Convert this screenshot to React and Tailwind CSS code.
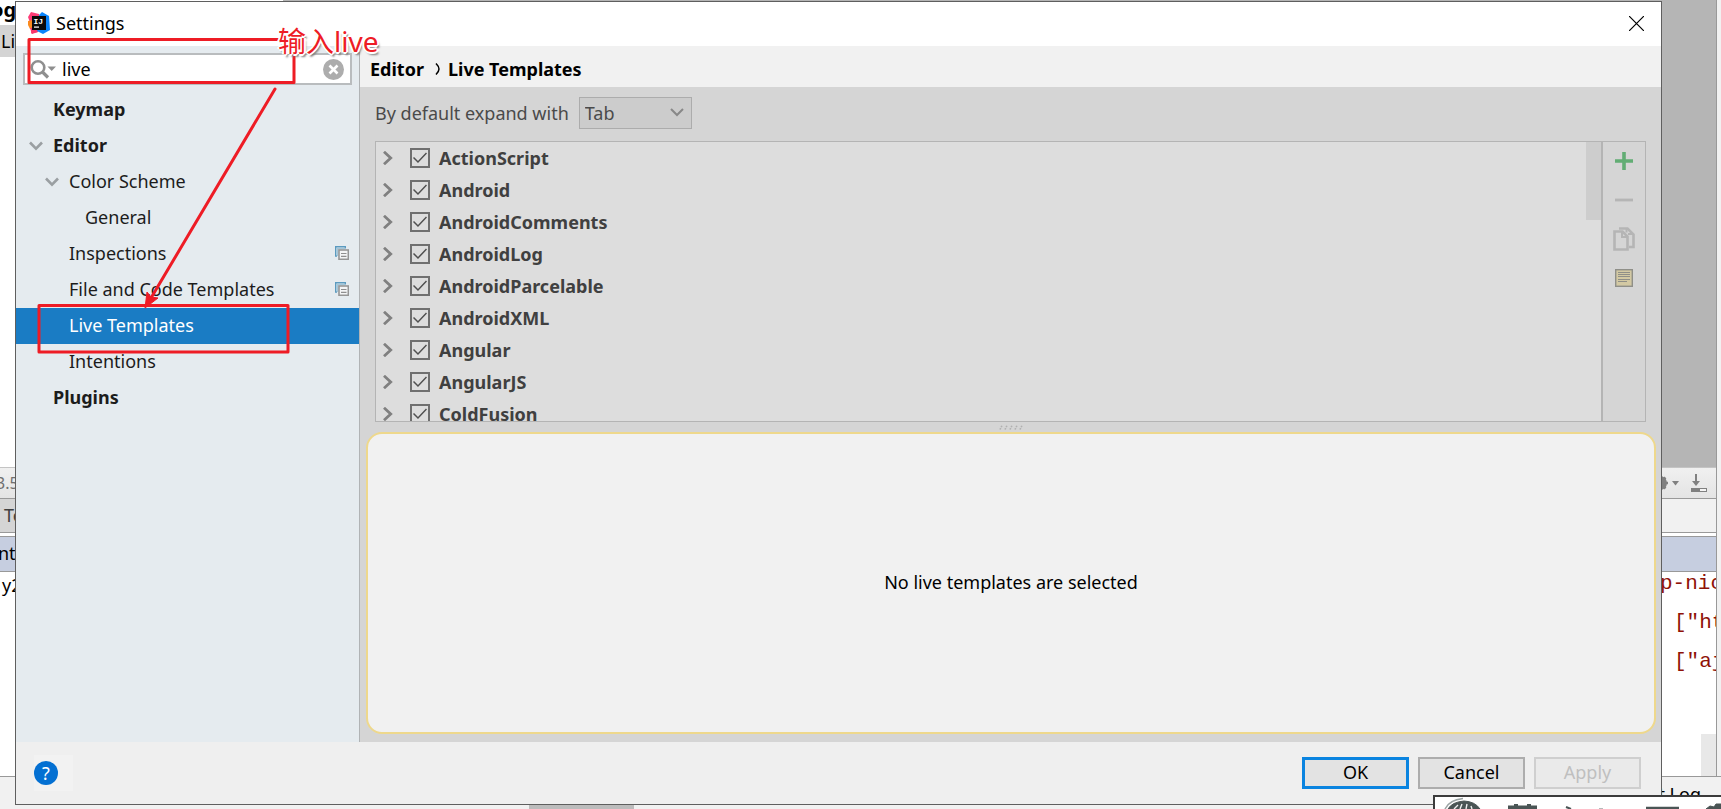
import React from "react";

const tree = [
  { label: "Keymap", pad: "pl-[13px]", bold: true },
  { label: "Editor", pad: "pl-[13px]", bold: true, open: true },
  { label: "Color Scheme", pad: "pl-[29px]", open: true },
  { label: "General", pad: "pl-[45px]" },
  { label: "Inspections", pad: "pl-[29px]", copy: true },
  { label: "File and Code Templates", pad: "pl-[29px]", copy: true },
  { label: "Live Templates", pad: "pl-[29px]", selected: true },
  { label: "Intentions", pad: "pl-[29px]" },
  { label: "Plugins", pad: "pl-[13px]", bold: true },
];

const groups = [
  "ActionScript",
  "Android",
  "AndroidComments",
  "AndroidLog",
  "AndroidParcelable",
  "AndroidXML",
  "Angular",
  "AngularJS",
  "ColdFusion",
];

function AppLogo() {
  return (
    <svg viewBox="0 0 22 22" className="h-[22px] w-[22px]" aria-hidden="true">
      <path d="M3 0 L11 2 L12 12 L10 20 L3 21.500 L3.500 15 L0 5 Z" fill="#fe3d78" />
      <path d="M0 9 L5 8 L6 15 L2 17 L0 13 Z" fill="#fb8b1e" />
      <path d="M2 16 L9 15 L10 20 L4 22 Z" fill="#f9356b" />
      <path d="M14 0 L21 4 L22 18 L15 22 L9 19 L12 10 L11 3 Z" fill="#0a84fb" />
      <rect x="4" y="4" width="14" height="14" fill="#0a0a0a" />
      <text x="5.500" y="11.500" fill="#fff" fontSize="8" fontWeight="700" fontFamily="Liberation Mono, monospace">IJ</text>
      <rect x="6" y="14.500" width="5" height="1.200" fill="#fff" />
    </svg>
  );
}

function DownChevron() {
  return (
    <svg viewBox="0 0 14 14" className="h-[14px] w-[14px]" fill="none" stroke="#9a9fa2" strokeWidth="2.600" aria-hidden="true">
      <path d="M1 4.500 L7 10.700 L13 4.500" />
    </svg>
  );
}

function CopyBadge() {
  return (
    <svg viewBox="0 0 14 14" className="h-[14px] w-[14px]" fill="none" aria-hidden="true">
      <path d="M2 10 H0.700 V0.700 H10.300 V2.500" stroke="#5b9abf" strokeWidth="1.400" />
      <path d="M2.500 10 V2.500 H10" stroke="#a3c5d8" strokeWidth="1.600" />
      <rect x="4" y="4" width="9.300" height="9.300" fill="#f4f5f6" stroke="#969696" strokeWidth="1.600" />
      <path d="M6 7.500 H11.500 M6 10.300 H11.500" stroke="#8f8f8f" strokeWidth="1.200" />
    </svg>
  );
}

function Sidebar() {
  return (
    <aside className="flex w-[344px] shrink-0 flex-col border-r border-[#b0b3b5] bg-[#e5ebef]">
      <div className="mx-[7px] mt-[7px] flex h-8 items-center border-2 border-[#b9bcbe] bg-white pl-[5px] pr-[6px]">
        <svg viewBox="0 0 26 20" className="h-5 w-[26px] shrink-0" aria-hidden="true">
          <circle cx="8" cy="8.500" r="6.300" fill="none" stroke="#8f8f8f" strokeWidth="2.600" />
          <path d="M12 12.500 L18 18.500" stroke="#8f8f8f" strokeWidth="3.200" />
          <path d="M17.500 7.500 H26 L21.700 12 Z" fill="#8f8f8f" />
        </svg>
        <input
          aria-label="Search settings"
          defaultValue="live"
          className="ml-[6px] min-w-0 flex-1 bg-transparent text-[18px] leading-6 text-black outline-none"
        />
        <button aria-label="Clear search" className="shrink-0">
          <svg viewBox="0 0 21 21" className="h-[21px] w-[21px]" aria-hidden="true">
            <circle cx="10.500" cy="10.500" r="10.500" fill="#adadad" />
            <path d="M6.500 6.500 L14.500 14.500 M14.500 6.500 L6.500 14.500" stroke="#fff" strokeWidth="2.600" />
          </svg>
        </button>
      </div>
      <ul className="mt-[7px]">
        {tree.map((n) => (
          <li key={n.label}>
            <button
              className={`flex h-9 w-full items-center gap-[10px] pb-[2px] pr-[10px] text-left text-[18px] leading-6 ${n.pad} ${
                n.selected ? "bg-[#1a7cc4] text-white" : "text-[#1c1c1c]"
              } ${n.bold ? "font-bold" : ""}`}
            >
              <span className="w-[14px] shrink-0">{n.open && <DownChevron />}</span>
              <span className="flex-1">{n.label}</span>
              {n.copy && <CopyBadge />}
            </button>
          </li>
        ))}
      </ul>
    </aside>
  );
}

function TemplateList() {
  return (
    <div className="mx-[15px] mt-3 flex h-[281px] shrink-0 border border-[#b4b4b4]">
      <div className="flex min-w-0 flex-1 overflow-hidden bg-[#dddddd]">
        <ul className="min-w-0 flex-1">
          {groups.map((g) => (
            <li key={g} className="flex h-8 items-center pl-[6px]">
              <button aria-label={`Expand ${g}`} className="mr-[17px]">
                <svg viewBox="0 0 11 14" className="h-[14px] w-[11px]" fill="none" stroke="#808080" strokeWidth="2.800" aria-hidden="true">
                  <path d="M2 0.800 L8.700 7 L2 13.200" />
                </svg>
              </button>
              <label className="flex items-center gap-[9px] text-[18px] font-bold leading-6 text-[#404040]">
                <span className="grid h-5 w-5 place-items-center">
                  <input
                    type="checkbox"
                    defaultChecked
                    className="col-start-1 row-start-1 h-5 w-5 appearance-none border-2 border-[#6f6f6f]"
                  />
                  <svg viewBox="0 0 14 14" className="pointer-events-none col-start-1 row-start-1 h-[14px] w-[14px]" fill="none" stroke="#505050" strokeWidth="1.500" aria-hidden="true">
                    <path d="M0.500 6.500 L5 11 L13.500 2" />
                  </svg>
                </span>
                {g}
              </label>
            </li>
          ))}
        </ul>
        <div className="h-[78px] w-[15px] shrink-0 bg-[#cdcdcd]" />
      </div>
      <div className="flex w-11 shrink-0 flex-col items-stretch border-l-2 border-[#b4b4b4]">
        <button aria-label="Add" className="grid h-[39px] place-items-center pb-[2px]">
          <svg viewBox="0 0 18 18" className="h-[18px] w-[18px]" aria-hidden="true">
            <path d="M9 0 V18 M0 9 H18" stroke="#62ad74" strokeWidth="3.600" />
          </svg>
        </button>
        <button aria-label="Remove" disabled className="grid h-[39px] place-items-center pb-[2px]">
          <svg viewBox="0 0 18 18" className="h-[18px] w-[18px]" aria-hidden="true">
            <path d="M0 9 H18" stroke="#b5b5b5" strokeWidth="2.800" />
          </svg>
        </button>
        <button aria-label="Duplicate" disabled className="grid h-[39px] place-items-center pb-[2px]">
          <svg viewBox="0 0 22 24" className="h-6 w-[22px]" fill="none" stroke="#b5b5b5" strokeWidth="2.600" aria-hidden="true">
            <path d="M6 1.500 H14.500 L20.500 7.500 V20 H16" />
            <path d="M13.500 2 V5.500 M15 7 H20" strokeWidth="2" />
            <path d="M1.500 4.500 H9.500 L14.500 9.500 V22.500 H1.500 Z" />
            <path d="M9 5 V10 H14.500" strokeWidth="2" />
          </svg>
        </button>
        <button aria-label="Restore defaults" className="grid h-[39px] place-items-center pb-[2px]">
          <svg viewBox="0 0 18 18" className="h-[18px] w-[18px]" fill="none" aria-hidden="true">
            <rect x="0.700" y="0.700" width="16.600" height="16.600" fill="#d3c9a3" stroke="#8f8f88" strokeWidth="1.400" />
            <path d="M3 3.500 H15 M3 5.500 H15 M3 7.500 H15 M3 10.500 H15 M3 12.500 H12" stroke="#8f8f88" strokeWidth="1" />
          </svg>
        </button>
      </div>
    </div>
  );
}

function SettingsDialog() {
  return (
    <section
      role="dialog"
      aria-label="Settings"
      className="absolute bottom-[4px] left-[15px] right-[59px] top-px flex flex-col border border-[#5f5f5f] bg-[#efefef]"
    >
      <header className="flex h-11 shrink-0 items-center bg-white pb-[2px] pl-3 pr-[17px]">
        <AppLogo />
        <h1 className="ml-[6px] flex-1 text-[18px] leading-6 text-black">Settings</h1>
        <button aria-label="Close">
          <svg viewBox="0 0 15 15" className="h-[15px] w-[15px]" stroke="#000" strokeWidth="1.200" aria-hidden="true">
            <path d="M0 0 L15 15 M15 0 L0 15" />
          </svg>
        </button>
      </header>

      <div className="flex min-h-0 flex-1">
        <Sidebar />
        <main className="flex min-w-0 flex-1 flex-col bg-[#d5d5d5]">
          <nav className="flex h-[41px] shrink-0 items-center bg-[#f1f1f1] pl-[10px] pt-[4px] text-[18px] font-bold leading-6 text-black">
            <span>Editor</span>
            <svg viewBox="0 0 6 12" className="ml-[11px] mr-[7px] h-3 w-[6px]" fill="none" stroke="#000" strokeWidth="1.500" aria-hidden="true">
              <path d="M1 0.500 Q4 3.500 4 6 Q4 8.500 1 11.500" />
            </svg>
            <span>Live Templates</span>
          </nav>
          <div className="ml-[15px] mt-[10px] flex shrink-0 items-center gap-[10px] text-[18px] leading-6 text-[#4a4a4a]">
            <label htmlFor="expand-key">By default expand with</label>
            <div className="grid items-center">
              <select
                id="expand-key"
                className="col-start-1 row-start-1 h-8 w-[113px] appearance-none border border-[#acacac] bg-[#cccccc] pl-[5px] text-[18px] leading-6"
              >
                <option>Tab</option>
                <option>Enter</option>
                <option>Space</option>
              </select>
              <svg viewBox="0 0 14 10" className="pointer-events-none col-start-1 row-start-1 mr-2 h-[10px] w-[14px] justify-self-end" fill="none" stroke="#888" strokeWidth="2" aria-hidden="true">
                <path d="M1 1 L7 7 L13 1" />
              </svg>
            </div>
          </div>
          <TemplateList />
          <div className="grid h-[10px] shrink-0 place-items-center">
            <svg viewBox="0 0 24 5" className="h-[5px] w-6" stroke="#b0b0b0" strokeWidth="1.600" strokeDasharray="1.600 1" aria-hidden="true">
              <path d="M1 4.500 L3 0.500 M6 4.500 L8 0.500 M11 4.500 L13 0.500 M16 4.500 L18 0.500 M21 4.500 L23 0.500" />
            </svg>
          </div>
          <div className="mb-2 ml-[6px] mr-[5px] grid flex-1 place-items-center rounded-2xl border-2 border-[#eed88c] bg-[#f1f1f1] pb-[2px] text-[18px] leading-6 text-black">
            No live templates are selected
          </div>
        </main>
      </div>

      <footer className="flex h-[62px] shrink-0 items-center justify-between pl-[18px] pr-5">
        <div className="flex h-9 w-[39px] items-center bg-[#f2f2f2]">
          <button aria-label="Help" className="grid h-6 w-6 place-items-center rounded-full bg-[#0470d2] text-[18px] leading-6 text-white">
            ?
          </button>
        </div>
        <div className="flex gap-[9px] text-[18px] leading-6">
          <button className="flex h-8 w-[107px] items-center justify-center border-[3px] border-[#0a84e0] bg-[#e3e3e3] pb-[2px] text-black">OK</button>
          <button className="flex h-8 w-[107px] items-center justify-center border-2 border-[#adadad] bg-[#e3e3e3] pb-[2px] text-black">Cancel</button>
          <button disabled className="flex h-8 w-[107px] items-center justify-center border-2 border-[#cfcfcf] bg-[#eaeaea] pb-[2px] text-[#bfbfbf]">Apply</button>
        </div>
      </footer>
    </section>
  );
}

/* The editor window that lies behind the dialog. */
function IdeWindow() {
  return (
    <div className="flex h-full flex-col bg-white text-[18px] leading-6 text-black">
      <div className="flex min-h-0 flex-1">
        <div className="flex min-w-0 flex-1 flex-col">
          <div className="flex min-h-0 flex-1">
            <div className="w-[283px] shrink-0 bg-white">
              <div className="-ml-[9px] h-[25px] text-[20px] font-bold leading-[20px]">og</div>
              <div className="h-8 bg-[#d4d4d4] pl-px leading-8">Li</div>
            </div>
            <div className="flex-1 bg-[#b5b5b5]" />
          </div>
          <div className="flex h-8 shrink-0 items-center justify-between border-b border-t border-b-[#999] border-t-[#c4c4c4] bg-gradient-to-b from-[#f0f0f0] to-[#e4e4e4] pr-[9px]">
            <span className="-ml-1 text-base text-[#707070]">3.5</span>
            <svg viewBox="0 0 56 20" className="h-5 w-14" aria-hidden="true">
              <circle cx="9" cy="10" r="5" fill="none" stroke="#808080" strokeWidth="4" />
              <path d="M9 2 V18 M2 10 H17 M3.500 4.500 L14.500 15.500 M14.500 4.500 L3.500 15.500" stroke="#808080" strokeWidth="2.500" />
              <path d="M21 8 H28 L24.500 12.500 Z" fill="#808080" />
              <path d="M45 1 V11" stroke="#808080" strokeWidth="2" />
              <path d="M41 8 H49 L45 13 Z" fill="#808080" />
              <rect x="40" y="15" width="16" height="4" fill="#808080" />
              <rect x="49" y="16" width="6" height="2" fill="#f5f5f5" />
            </svg>
          </div>
          <div className="flex h-[34px] shrink-0 items-center border-b border-[#999] bg-[#f1f1f1]">
            <span className="h-full w-[283px] bg-[#d5d5d5] pl-1 leading-8 text-[#404040]">Te</span>
          </div>
          <div className="mt-[3px] flex h-9 shrink-0 items-center border-y border-[#999] bg-[#c6cee0] pb-[2px]">
            <span className="-ml-[2px]">nt</span>
          </div>
          <div className="flex h-[204px] shrink-0 justify-between">
            <div className="pl-[2px] pt-px">y2</div>
            <div className="flex">
              <div className="w-14 overflow-hidden whitespace-pre font-['Liberation_Mono',monospace] text-[21px] leading-[39px] text-[#8f1208]">
                <div className="-mt-2">p-nic</div>
                <div className="pl-[14px]">["ht</div>
                <div className="pl-[14px]">["aj</div>
              </div>
              <div className="-ml-[15px] mt-[162px] w-[15px] bg-[#e8e8e8]" />
            </div>
          </div>
        </div>
        <div className="w-[5px] shrink-0 border-l border-[#999] bg-[#f1f1f1]" />
      </div>
      <div className="flex h-[33px] shrink-0 justify-between border-t border-[#999] bg-[#f1f1f1] pr-5">
        <div className="ml-[529px] w-[105px] bg-[#bcbcbc]" />
        <span className="pt-[5px]">Event Log</span>
      </div>
    </div>
  );
}

function InputMethodBar() {
  return (
    <div className="absolute bottom-0 right-0 h-[14px] w-[288px] overflow-hidden border-l-2 border-t-2 border-[#3c3c3c] bg-white">
      <svg viewBox="0 0 286 12" className="h-3 w-[286px]" fill="none" stroke="#4a5555" aria-hidden="true">
        <path d="M10 12 Q14 3 28 1.500" stroke="#9aa3a3" strokeWidth="1.500" />
        <path d="M13 12 Q17 5 29 4 Q40 4.500 45 12 Z" fill="#4a5555" />
        <path d="M19 12 L23 8 M25 12 L27 7 M31 12 L32 7 M37 12 L36 9" stroke="#eef0f0" strokeWidth="1.400" />
        <path d="M73 10.500 H102 M81 7 V12 M94 7 V12" strokeWidth="4" />
        <path d="M131 10 L136 12" strokeWidth="2" />
        <path d="M164 11.500 H168" stroke="#b5baba" strokeWidth="1" />
        <path d="M211 11 H244" strokeWidth="2.500" />
        <path d="M271 12 L275 9 L279 10 L281 7 H286 V12 Z" fill="#4a5555" />
      </svg>
    </div>
  );
}

function Annotations() {
  return (
    <div className="pointer-events-none absolute left-0 top-0">
      <svg viewBox="0 0 400 370" className="h-[370px] w-[400px]" fill="none" stroke="#ee1c25" strokeWidth="3" strokeLinejoin="round" aria-hidden="true">
        <rect x="29" y="39.500" width="265" height="43" />
        <rect x="39" y="305.500" width="249" height="46.500" />
        <path d="M275 89 L151 298" strokeLinecap="round" />
        <path d="M145 308 L147 292 L151 297 L158 298 Z" fill="#ee1c25" strokeWidth="1" />
      </svg>
      <span className="absolute left-[278px] top-[23px] whitespace-nowrap font-['Noto_Sans','Noto_Sans_CJK_SC',sans-serif] text-[28px] leading-9 text-[#ee1c25] [text-shadow:-2px_0_#fff,2px_0_#fff,0_-2px_#fff,0_2px_#fff,1px_1px_#fff,-1px_-1px_#fff,2px_3px_2px_#777]">
        输入live
      </span>
    </div>
  );
}

export default function App() {
  return (
    <div className="relative h-screen min-h-[760px] overflow-hidden font-['Noto_Sans','Noto_Sans_CJK_SC',sans-serif]">
      <IdeWindow />
      <SettingsDialog />
      <InputMethodBar />
      <Annotations />
    </div>
  );
}
